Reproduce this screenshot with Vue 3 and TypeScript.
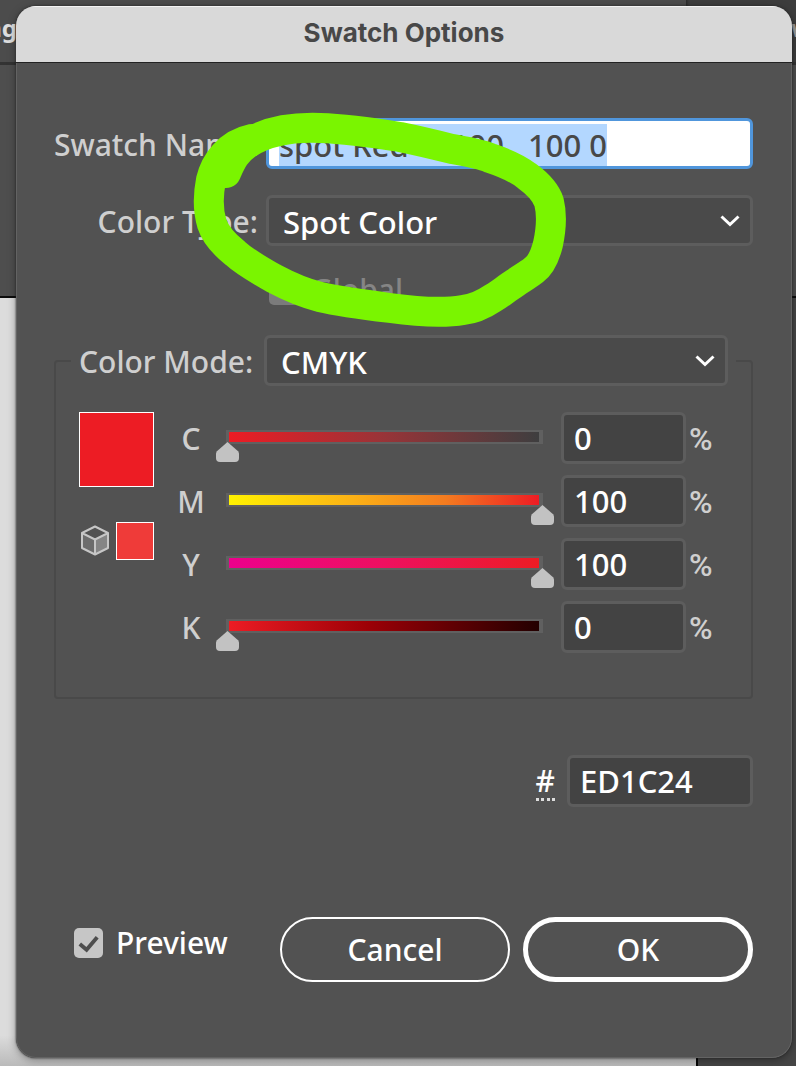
<script setup lang="ts">
import { onMounted, ref } from 'vue'

interface Channel {
  key: string
  value: number
  gradient: string
}

const swatchName = ref('spot Red  0 100   100 0')
const nameInput = ref<HTMLInputElement | null>(null)
const colorType = ref('Spot Color')
const colorMode = ref('CMYK')
const hex = ref('ED1C24')
const preview = ref(true)

const channels = ref<Channel[]>([
  { key: 'C', value: 0, gradient: 'linear-gradient(to right, #ed1c24, #983438 50%, #3e3e3f)' },
  { key: 'M', value: 100, gradient: 'linear-gradient(to right, #fff200, #fbb116 40%, #f47b20 70%, #ed1c24)' },
  { key: 'Y', value: 100, gradient: 'linear-gradient(to right, #ec008c, #ee1060 50%, #ed1c24)' },
  { key: 'K', value: 0, gradient: 'linear-gradient(to right, #ed1c24, #9c0006 45%, #230000)' },
])

onMounted(() => {
  nameInput.value?.focus()
  nameInput.value?.select()
})
</script>

<template>
  <div class="screen">
    <div class="backdrop">
      <div class="backdrop-top">
        <span class="tab-left">ng</span>
        <span class="tab-right">w</span>
      </div>
      <div class="backdrop-panel"></div>
      <div class="backdrop-canvas">
        <div class="artboard"></div>
        <div class="side"></div>
      </div>
    </div>

    <form class="dialog" @submit.prevent>
      <header class="titlebar"><h1>Swatch Options</h1></header>

      <div class="content">
        <div class="fields">
          <label for="swatch-name">Swatch Name:</label>
          <input id="swatch-name" ref="nameInput" v-model="swatchName" class="name" type="text" />

          <label for="color-type">Color Type:</label>
          <div class="select">
            <select id="color-type" v-model="colorType">
              <option>Spot Color</option>
              <option>Process Color</option>
            </select>
            <svg viewBox="0 0 20 12" aria-hidden="true"><path d="M1.5 1.5 10 9.5 18.500 1.500" /></svg>
          </div>

          <label class="check global">
            <input type="checkbox" disabled />
            <span>Global</span>
          </label>
        </div>

        <fieldset>
          <legend>
            <label for="color-mode">Color Mode:</label>
            <div class="select">
              <select id="color-mode" v-model="colorMode">
                <option>CMYK</option>
                <option>RGB</option>
              </select>
              <svg viewBox="0 0 20 12" aria-hidden="true"><path d="M1.5 1.5 10 9.5 18.500 1.500" /></svg>
            </div>
          </legend>

          <div class="mixer">
            <div class="swatches">
              <div class="current"></div>
              <div class="gamut">
                <svg class="cube" viewBox="0 0 30 32" aria-hidden="true">
                  <path d="M16 14 29 8V23L16 30Z" fill="#858585" />
                  <path d="M16 14 3 8V23L16 30Z" fill="#6c6c6c" />
                  <path d="M16 1.500 29 8V23L16 29.500 3 23V8ZM3 8 16 14.500 29 8M16 14.500V29.500" fill="none" stroke="#c6c6c6" stroke-width="2" stroke-linejoin="round" />
                </svg>
                <div class="nearest"></div>
              </div>
            </div>

            <div class="channels">
              <div v-for="c in channels" :key="c.key" class="channel">
                <label :for="'value-' + c.key">{{ c.key }}</label>
                <input
                  v-model.number="c.value"
                  class="slider"
                  type="range"
                  min="0"
                  max="100"
                  :aria-label="c.key"
                  :style="{ '--ramp': c.gradient }"
                />
                <input :id="'value-' + c.key" v-model="c.value" class="box" type="text" />
                <span class="percent">%</span>
              </div>
            </div>
          </div>
        </fieldset>

        <div class="hex">
          <label for="hex">#</label>
          <input id="hex" v-model="hex" class="box" type="text" />
        </div>

        <div class="actions">
          <label class="check">
            <span class="tick">
              <input v-model="preview" type="checkbox" />
              <svg v-if="preview" viewBox="0 0 30 30" aria-hidden="true"><path d="M6 16 13 22 24 9" /></svg>
            </span>
            <span>Preview</span>
          </label>
          <button type="button">Cancel</button>
          <button type="submit" class="primary">OK</button>
        </div>
      </div>
    </form>

    <svg class="marker" width="400" height="240" viewBox="180 100 400 240" aria-hidden="true">
      <path
        d="M226 173C231 162 235 152 247 144C265 132 290 127 320 128C350 129 375 133 400 137C420 141 436 145 452 149C468 152 480 154 490 158C505 163 517 168 527 176C538 184 546 193 549 202C552 214 551 230 548 244C545 256 541 265 534 270C528 275 520 279 515 283C507 288 500 294 493 298C484 304 474 309 463 310C440 314 412 311 390 308C366 305 342 302 320 297C304 293 288 286 273 278C259 270 246 263 235 253C225 245 216 236 212 224C208 211 208 195 211 180C215 163 228 144 252 139"
      />
    </svg>
  </div>
</template>

<style>
body {
  margin: 0;
}
</style>

<style scoped>
* {
  box-sizing: border-box;
}
.screen {
  position: relative;
  display: grid;
  grid-template-columns: minmax(0, 1fr);
  min-height: 100vh;
  overflow: hidden;
  font-family: "Noto Sans", "Open Sans", sans-serif;
  font-size: 30px;
  font-weight: 500;
  line-height: 36px;
  color: #cfcfcf;
}
.backdrop,
.dialog {
  grid-area: 1 / 1;
}
.backdrop {
  display: flex;
  flex-direction: column;
}
.backdrop-top {
  display: flex;
  justify-content: space-between;
  height: 65px;
  padding-top: 10px;
  background: linear-gradient(to right, #4c4c4c calc(100% - 110px), #2b2b2b calc(100% - 110px), #3d3d3d calc(100% - 107px));
  border-bottom: 3px solid #333;
  font-weight: 700;
  font-size: 24px;
  color: #ddd;
}
.tab-left {
  display: flex;
  justify-content: flex-end;
  width: 17px;
}
.tab-right {
  width: 5px;
  color: #999;
}
.backdrop-panel {
  height: 233px;
  background: #4e4e4e;
  border-bottom: 2px solid #0c0c0c;
}
.backdrop-canvas {
  display: flex;
  flex: 1;
}
.artboard {
  flex: 1;
  background: linear-gradient(to bottom, #dcdcdc 96%, #bababa);
  border-right: 2px solid #050505;
}
.side {
  width: 98px;
  background: #454545;
}
.dialog {
  display: flex;
  flex-direction: column;
  margin: 6px 4px 8px 16px;
  overflow: hidden;
  border-radius: 20px;
  background: #525252;
  box-shadow: 0 0 2px #222, 0 2px 8px rgba(0, 0, 0, 0.35);
}
.titlebar {
  height: 57px;
  background: #d9d9d9;
  border-top: 1px solid #f3f3f3;
  border-bottom: 1px solid #222;
}
h1 {
  margin: 0;
  font-family: Inter, Roboto, sans-serif;
  font-size: 26px;
  font-weight: 700;
  line-height: 52px;
  text-align: center;
  color: #484848;
}
.content {
  flex: 1;
  padding: 55px 38px 75px 37px;
  border: 1px solid #636363;
  border-top: 0;
  border-radius: 0 0 20px 20px;
}
.fields {
  display: grid;
  grid-template-columns: 204px 1fr;
  gap: 26px 8px;
  align-items: center;
}
.fields > label {
  text-align: right;
  white-space: nowrap;
}
.fields > label:not(.check),
legend label {
  padding-top: 3px;
}
input,
select,
button {
  font: inherit;
  margin: 0;
  outline: none;
}
.name,
.box,
.select select {
  font-size: 31px;
}
.name {
  width: 100%;
  height: 51px;
  padding: 2px 10px 0;
  border: 3px solid #5096dc;
  border-radius: 6px;
  background: #fff;
  color: #484848;
}
.name::selection {
  background: #b3d7ff;
  color: #484848;
}
.select {
  position: relative;
  flex: 1;
}
.select select {
  display: block;
  width: 100%;
  height: 51px;
  padding: 2px 14px 0;
  appearance: none;
  border: 3px solid #5d5d5d;
  border-radius: 6px;
  background: #4a4a4a;
  color: #fff;
}
.select svg {
  position: absolute;
  right: 13px;
  top: 20px;
  width: 20px;
  height: 12px;
  fill: none;
  stroke: #fff;
  stroke-width: 3;
  pointer-events: none;
}
.check {
  display: flex;
  align-items: center;
  gap: 13px;
  color: #fff;
}
.check input {
  display: block;
  width: 29px;
  height: 30px;
  appearance: none;
  border-radius: 5px;
  background: #c6c6c6;
}
.fields .global {
  grid-column: 2;
  padding-left: 3px;
  color: #858585;
}
.check.global input {
  background: #7b7b7b;
}
.tick {
  display: grid;
}
.tick > * {
  grid-area: 1 / 1;
}
.tick svg {
  width: 29px;
  height: 30px;
  fill: none;
  stroke: #4e4e4e;
  stroke-width: 4;
  pointer-events: none;
}
fieldset {
  min-width: 0;
  margin: 27px 0 0;
  padding: 26px 39px 44px 23px;
  border: 2px solid #494949;
  border-radius: 4px;
}
legend {
  display: flex;
  align-items: center;
  gap: 8px;
  width: calc(100% + 32px);
  margin-left: -8px;
  padding: 0 8px;
}
legend label {
  width: 177px;
  white-space: nowrap;
}
.mixer {
  display: flex;
  gap: 23px;
}
.swatches {
  width: 75px;
}
.current {
  height: 75px;
  border: 1px solid #fff;
  background: #ed1c24;
}
.gamut {
  display: flex;
  justify-content: space-between;
  align-items: center;
  margin-top: 35px;
}
.cube {
  width: 30px;
  height: 32px;
}
.nearest {
  width: 38px;
  height: 38px;
  border: 1px solid #fff;
  background: #ef3b39;
}
.channels {
  display: grid;
  flex: 1;
  gap: 11px;
}
.channel {
  display: grid;
  grid-template-columns: 28px minmax(0, 1fr) 125px 26px;
  align-items: center;
}
.channel label {
  padding-top: 2px;
  text-align: center;
}
.slider {
  align-self: start;
  justify-self: stretch;
  width: calc(100% - 18px);
  height: 32px;
  margin: 18px 0 0 11px;
  appearance: none;
  background:
    var(--ramp) 13px 2px / calc(100% - 28px) 10px no-repeat,
    linear-gradient(#606060, #606060) 10px 0 / calc(100% - 21px) 14px no-repeat;
}
.slider::-webkit-slider-runnable-track {
  height: 32px;
}
.slider::-webkit-slider-thumb {
  width: 23px;
  height: 20px;
  margin-top: 12px;
  appearance: none;
  border-radius: 0 0 4px 4px;
  background: #c2c2c2;
  clip-path: polygon(50% 0, 96% 46%, 100% 56%, 100% 100%, 0 100%, 0 56%, 4% 46%);
}
.box {
  width: 100%;
  height: 52px;
  padding: 0 10px;
  border: 3px solid #5d5d5d;
  border-radius: 6px;
  background: #434343;
  color: #fff;
}
.percent {
  padding: 2px 0 0 3px;
  font-family: Roboto, sans-serif;
  font-size: 32px;
}
.hex {
  display: flex;
  justify-content: flex-end;
  align-items: center;
  gap: 12px;
  margin-top: 56px;
  color: #fff;
}
.hex label {
  padding-top: 3px;
  border-bottom: 3px dotted #ddd;
  line-height: 34px;
}
.hex .box {
  width: 186px;
}
.actions {
  display: flex;
  gap: 13px;
  margin-top: 110px;
  padding-left: 20px;
}
.actions .check {
  flex: 1;
  align-self: flex-start;
  margin-top: 8px;
}
button {
  width: 230px;
  height: 65px;
  padding: 0;
  border: 2px solid #fff;
  border-radius: 33px;
  background: transparent;
  color: #fff;
}
.primary {
  border-width: 5px;
}
.marker {
  position: absolute;
  left: 180px;
  top: 100px;
  fill: none;
  stroke: #7af500;
  stroke-width: 30;
  stroke-linecap: round;
  stroke-linejoin: round;
  pointer-events: none;
}
</style>
